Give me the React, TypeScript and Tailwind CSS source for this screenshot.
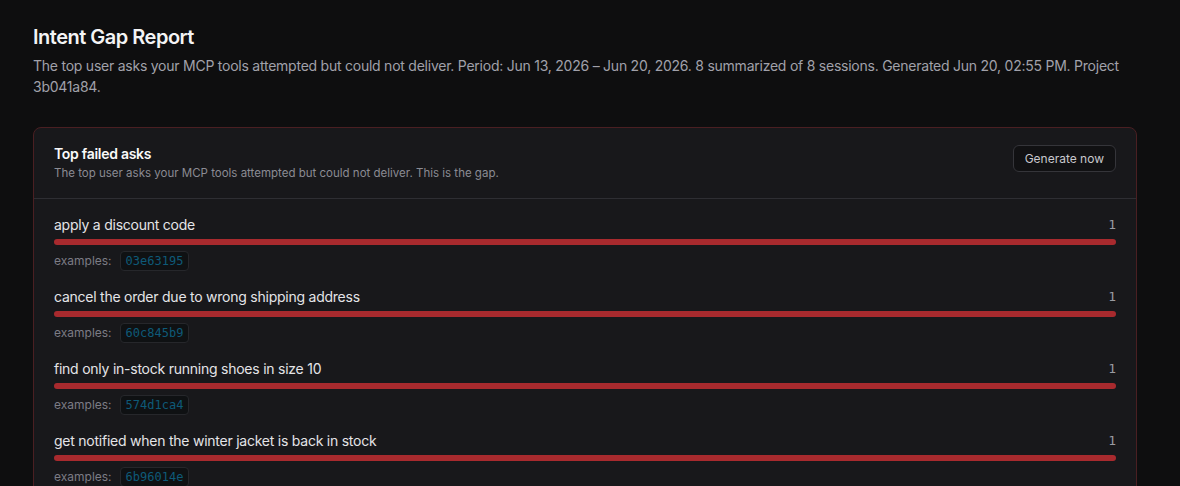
import React from "react";

const rows = [
  { label: "apply a discount code", count: 1, ex: "03e63195" },
  { label: "cancel the order due to wrong shipping address", count: 1, ex: "60c845b9" },
  { label: "find only in-stock running shoes in size 10", count: 1, ex: "574d1ca4" },
  { label: "get notified when the winter jacket is back in stock", count: 1, ex: "6b96014e" },
  { label: "track a return refund status", count: 1, ex: "a1b2c3d4" },
];

export default function App() {
  return (
    <div
      className="min-h-screen bg-[#0e0e0f] pl-[33px] pr-[43px] pt-[23px] pb-10 text-[#f4f4f5] tracking-[-0.015em]"
      style={{ fontFamily: "Inter, 'Noto Sans', sans-serif" }}
    >
      <h1 className="text-[20px] leading-7 font-semibold tracking-[-0.025em] text-[#f4f4f5]">Intent Gap Report</h1>
      <p className="mt-1 text-[14px] leading-[21px] text-[#a1a1aa]">
        The top user asks your MCP tools attempted but could not deliver. Period: Jun 13, 2026 – Jun 20, 2026. 8 summarized of 8 sessions. Generated Jun 20, 02:55 PM. Project 3b041a84.
      </p>

      <div className="mt-[30px] rounded-lg border border-[#4a1f22] bg-[#18181b]">
        <div className="flex items-start justify-between border-b border-[#2e2e33] px-5 pt-4 pb-[17px]">
          <div>
            <div className="text-[14px] leading-5 font-semibold tracking-[-0.02em] text-[#fafafa]">Top failed asks</div>
            <div className="mt-px text-[11.5px] leading-4 tracking-normal text-[#8b8b93]">
              The top user asks your MCP tools attempted but could not deliver. This is the gap.
            </div>
          </div>
          <button className="mt-px h-[27px] rounded-md border border-[#35353a] bg-[#111113] px-[11px] text-[12px] tracking-normal text-[#c8c8cd]">
            Generate now
          </button>
        </div>
        <div className="flex flex-col gap-4 px-5 pt-4 pb-4">
          {rows.map((r) => (
            <div key={r.ex}>
              <div className="flex items-center justify-between">
                <span className="text-[14px] leading-5 text-[#e4e4e7]">{r.label}</span>
                <span
                  className="text-[13px] leading-5 tracking-normal text-[#9a9aa1]"
                  style={{ fontFamily: "'DejaVu Sans Mono', monospace" }}
                >
                  {r.count}
                </span>
              </div>
              <div className="mt-1 h-1.5 w-full rounded-full bg-[#a82a2e]" />
              <div className="mt-[6px] flex items-center gap-2">
                <span className="text-[12px] tracking-normal text-[#7c7c85]">examples:</span>
                <span
                  className="h-5 rounded border border-[#26272b] bg-[#0f1113] px-[5px] text-[12px] leading-[18px] tracking-normal text-[#0e5a78]"
                  style={{ fontFamily: "'DejaVu Sans Mono', monospace" }}
                >
                  {r.ex}
                </span>
              </div>
            </div>
          ))}
        </div>
      </div>
    </div>
  );
}
